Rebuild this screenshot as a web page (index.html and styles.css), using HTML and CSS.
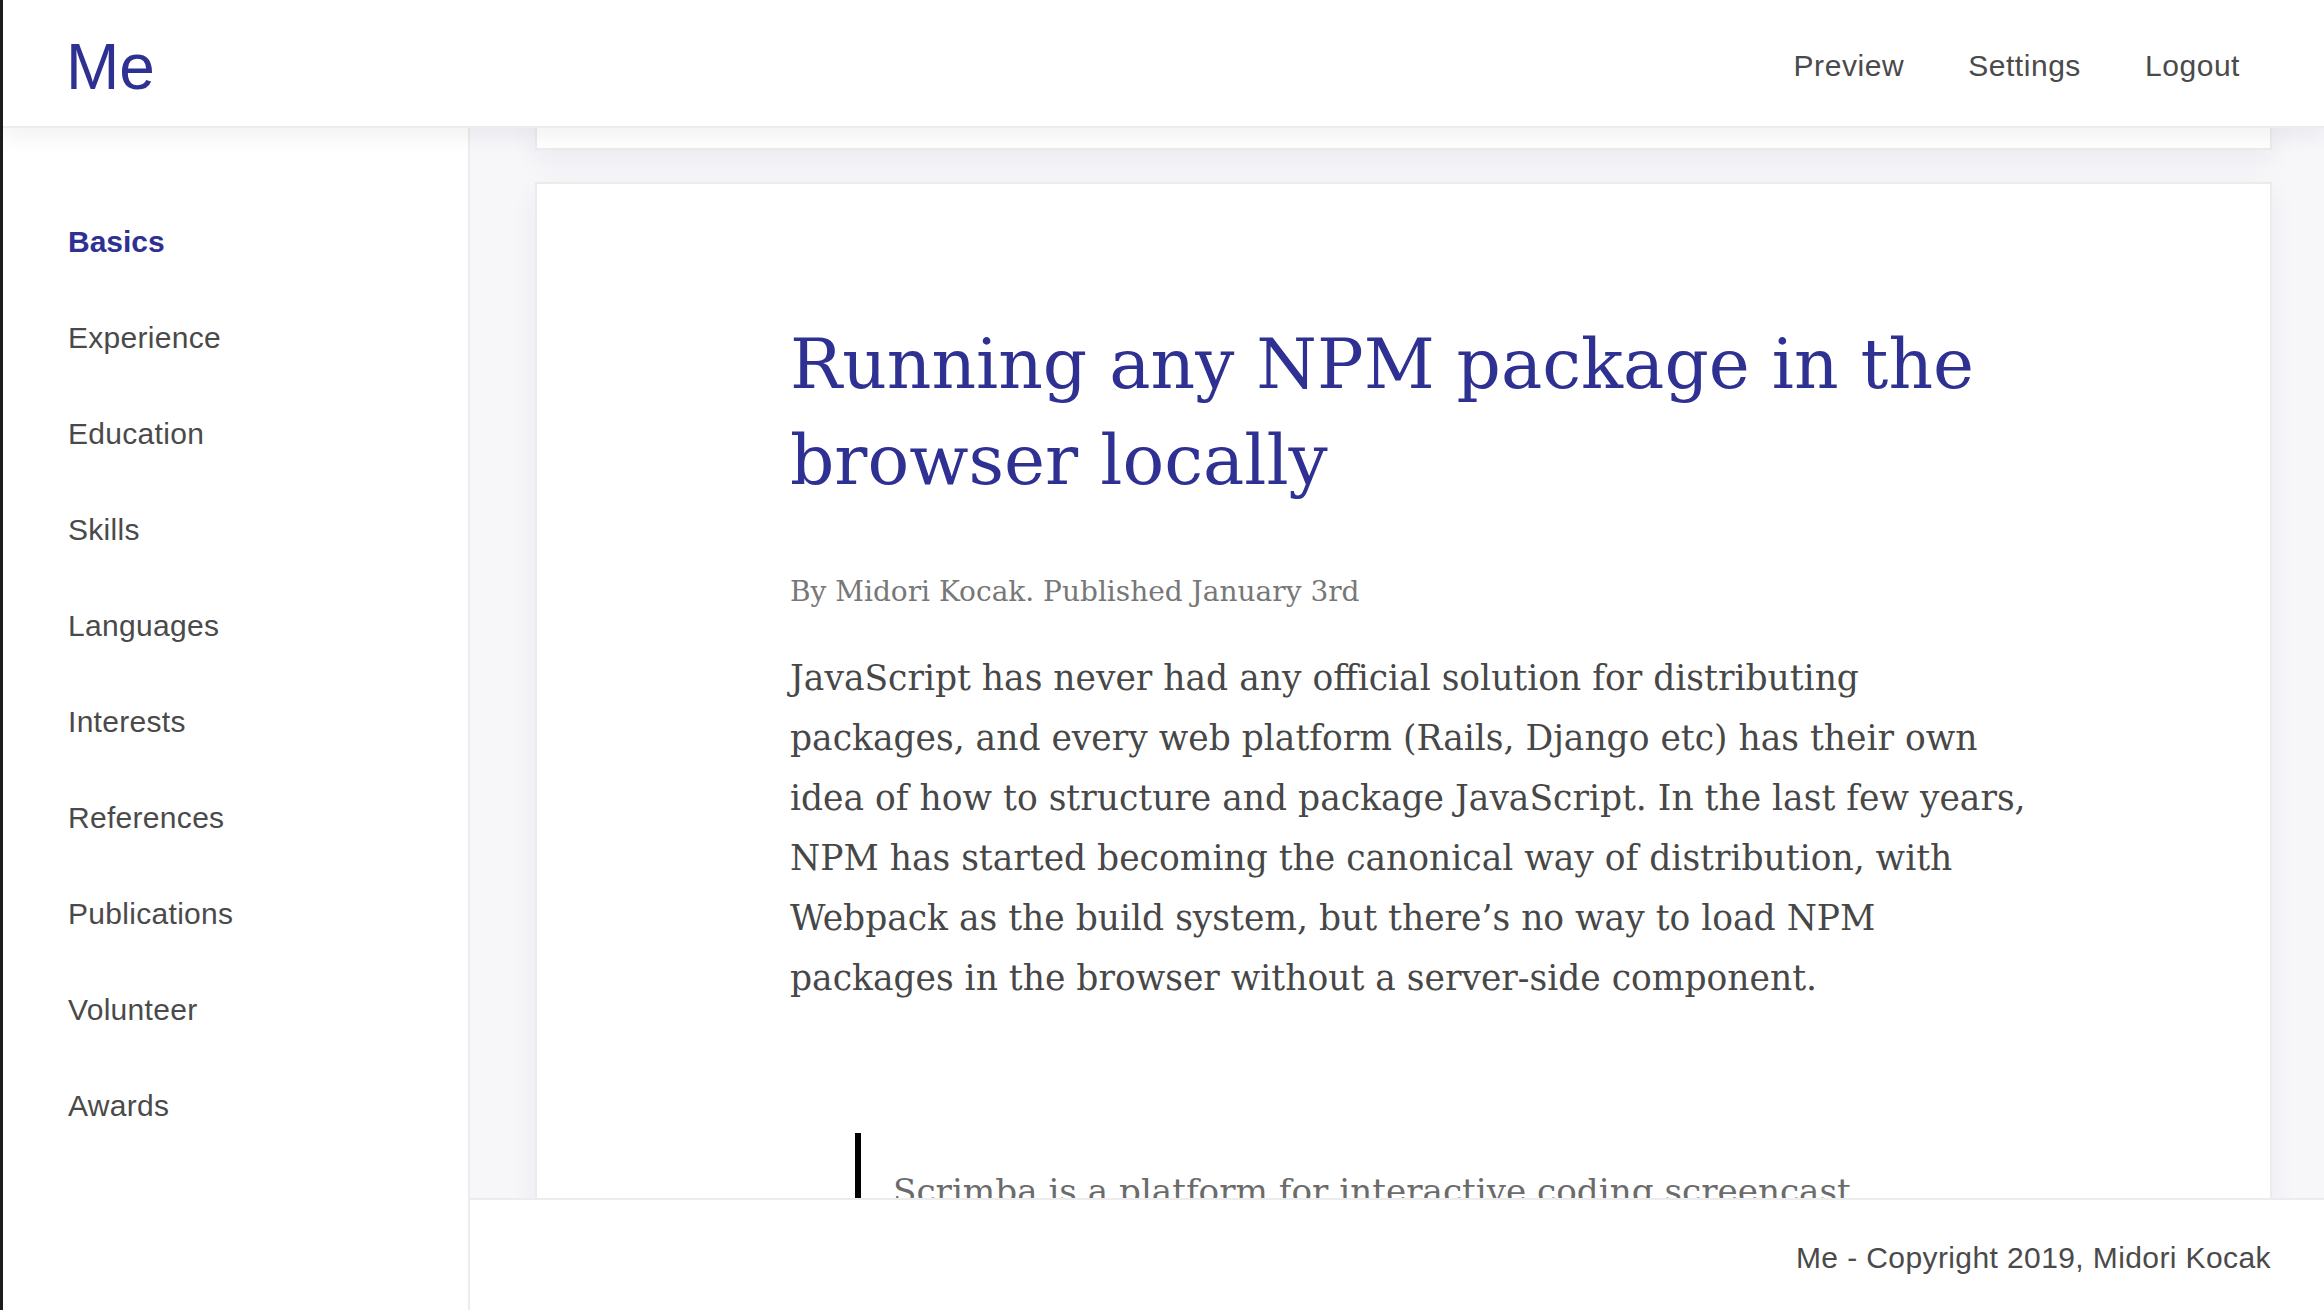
FILE: index.html
```html
<!DOCTYPE html>
<html lang="en">
<head>
<meta charset="utf-8">
<title>Me</title>
<link rel="stylesheet" href="styles.css">
</head>
<body>
<div class="app">
  <header class="topbar">
    <a class="logo" href="#">Me</a>
    <nav class="topnav">
      <a href="#">Preview</a>
      <a href="#">Settings</a>
      <a href="#">Logout</a>
    </nav>
  </header>
  <div class="layout">
    <aside class="sidebar">
      <a class="side-link active" href="#">Basics</a>
      <a class="side-link" href="#">Experience</a>
      <a class="side-link" href="#">Education</a>
      <a class="side-link" href="#">Skills</a>
      <a class="side-link" href="#">Languages</a>
      <a class="side-link" href="#">Interests</a>
      <a class="side-link" href="#">References</a>
      <a class="side-link" href="#">Publications</a>
      <a class="side-link" href="#">Volunteer</a>
      <a class="side-link" href="#">Awards</a>
    </aside>
    <div class="main">
      <div class="scroll">
        <div class="card stub"></div>
        <article class="card post">
          <div class="post-inner">
            <h1 class="post-title">Running any NPM package in the browser locally</h1>
            <p class="byline">By Midori Kocak. Published January 3rd</p>
            <p class="post-text">JavaScript has never had any official solution for distributing<br>packages, and every web platform (Rails, Django etc) has their own<br>idea of how to structure and package JavaScript. In the last few years,<br>NPM has started becoming the canonical way of distribution, with<br>Webpack as the build system, but there’s no way to load NPM<br>packages in the browser without a server-side component.</p>
            <blockquote class="quote">Scrimba is a platform for interactive coding screencast<br>where you can pause the video and edit the code.</blockquote>
          </div>
        </article>
      </div>
      <footer class="footer">Me - Copyright 2019, Midori Kocak</footer>
    </div>
  </div>
</div>
</body>
</html>
```
FILE: styles.css
```css
* { box-sizing: border-box; }

html, body {
  margin: 0;
  padding: 0;
  background: #ffffff;
}

a { text-decoration: none; }

.app {
  width: 2324px;
  height: 1310px;
  border-left: 3px solid #1c1c1c;
  display: grid;
  grid-template-rows: 128px 1fr;
  overflow: hidden;
  font-family: "Liberation Sans", Arial, sans-serif;
  color: #4a4a4a;
}

.topbar {
  position: relative;
  z-index: 2;
  display: flex;
  align-items: center;
  justify-content: space-between;
  padding: 6px 84px 0 63px;
  background: #ffffff;
  border-bottom: 2px solid #ececec;
  box-shadow: 0 6px 22px rgba(30, 30, 60, 0.07);
}

.logo {
  font-size: 64px;
  line-height: 64px;
  color: #2e3192;
  padding-top: 2px;
}

.topnav {
  display: flex;
  gap: 64px;
}

.topnav a {
  font-size: 30px;
  line-height: 36px;
  letter-spacing: 0.55px;
  color: #4a4a4a;
}

.layout {
  display: grid;
  grid-template-columns: 467px 1fr;
  min-height: 0;
}

.sidebar {
  display: flex;
  flex-direction: column;
  padding: 66px 0 0 65px;
  border-right: 2px solid #ececec;
  background: #ffffff;
}

.side-link {
  font-size: 30px;
  line-height: 36px;
  letter-spacing: 0.3px;
  padding: 30px 0;
  color: #4a4a4a;
}

.side-link.active {
  color: #2e3192;
  font-weight: 700;
  letter-spacing: 0;
}

.main {
  display: flex;
  flex-direction: column;
  min-height: 0;
}

.scroll {
  flex: 1;
  min-height: 0;
  overflow: hidden;
  background: #f7f7fa;
  padding: 0 52px 0 65px;
}

.card {
  background: #ffffff;
  border: 2px solid #ebebeb;
  box-shadow: 0 10px 26px rgba(40, 40, 90, 0.06);
}

.stub {
  height: 222px;
  margin-top: -200px;
}

.post {
  margin-top: 32px;
  padding: 132px 0 200px 253px;
}

.post-inner {
  max-width: 1300px;
  font-family: "DejaVu Serif", Georgia, serif;
}

.post-title {
  margin: 0;
  max-width: 1240px;
  font-size: 69.3px;
  line-height: 96px;
  font-weight: 400;
  color: #2e3192;
}

.byline {
  margin: 66px 0 0;
  font-size: 28px;
  line-height: 36px;
  color: #777777;
}

.post-text {
  margin: 38px 0 0;
  font-size: 34.5px;
  line-height: 60px;
  color: #474747;
  white-space: nowrap;
}

.quote {
  margin: 125px 0 0 65px;
  padding: 28px 0 0 32px;
  border-left: 6px solid #000000;
  font-size: 34.2px;
  line-height: 60px;
  color: #6b6b6b;
  white-space: nowrap;
}

.footer {
  height: 112px;
  flex: none;
  display: flex;
  align-items: center;
  justify-content: flex-end;
  padding: 6px 53px 0 0;
  background: #ffffff;
  border-top: 2px solid #ececec;
  font-size: 30px;
  line-height: 36px;
  letter-spacing: 0.4px;
  color: #4a4a4a;
}
```
